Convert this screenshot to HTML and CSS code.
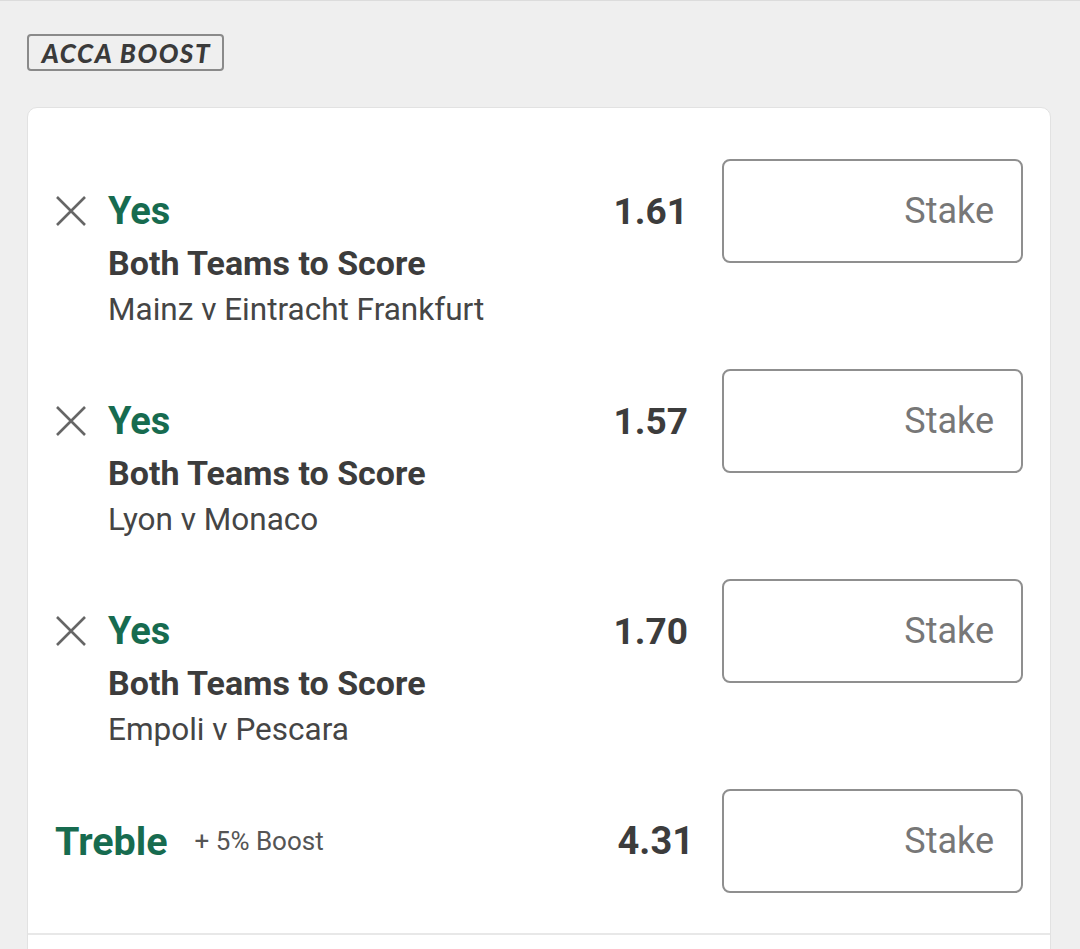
FILE: index.html
```html
<!DOCTYPE html>
<html lang="en">
<head>
<meta charset="utf-8">
<title>Acca Boost</title>
<link rel="stylesheet" href="styles.css">
</head>
<body>
<div class="page">
  <div class="badge-wrap"><span class="badge">ACCA BOOST</span></div>
  <section class="card">
    <div class="bet">
      <div class="bet-head">
        <svg class="remove" viewBox="0 0 30 30" width="30" height="30"><path d="M1 1 L29 29 M29 1 L1 29"/></svg>
        <span class="selection">Yes</span>
        <span class="odds">1.61</span>
        <div class="stake">Stake</div>
      </div>
      <div class="bet-body">
        <div class="market">Both Teams to Score</div>
        <div class="event">Mainz v Eintracht Frankfurt</div>
      </div>
    </div>
    <div class="bet">
      <div class="bet-head">
        <svg class="remove" viewBox="0 0 30 30" width="30" height="30"><path d="M1 1 L29 29 M29 1 L1 29"/></svg>
        <span class="selection">Yes</span>
        <span class="odds">1.57</span>
        <div class="stake">Stake</div>
      </div>
      <div class="bet-body">
        <div class="market">Both Teams to Score</div>
        <div class="event">Lyon v Monaco</div>
      </div>
    </div>
    <div class="bet">
      <div class="bet-head">
        <svg class="remove" viewBox="0 0 30 30" width="30" height="30"><path d="M1 1 L29 29 M29 1 L1 29"/></svg>
        <span class="selection">Yes</span>
        <span class="odds">1.70</span>
        <div class="stake">Stake</div>
      </div>
      <div class="bet-body">
        <div class="market">Both Teams to Score</div>
        <div class="event">Empoli v Pescara</div>
      </div>
    </div>
    <div class="multi">
      <span class="multi-name">Treble</span>
      <span class="boost">+ 5% Boost</span>
      <span class="multi-odds">4.31</span>
      <div class="stake">Stake</div>
    </div>
    <div class="card-foot"></div>
  </section>
</div>
</body>
</html>
```

FILE: styles.css
```css
* { box-sizing: border-box; }

html, body {
  margin: 0;
  padding: 0;
  background: #efefef;
}

body {
  font-family: Roboto, "Noto Sans", "Liberation Sans", sans-serif;
  color: #3c3c3c;
  border-top: 1px solid #dcdcdc;
}

.page {
  padding: 33px 29px 0 27px;
}

.badge-wrap {
  display: flex;
}

.badge {
  display: inline-flex;
  align-items: center;
  justify-content: center;
  width: 197px;
  height: 37px;
  padding-left: 2px;
  border: 2px solid #8a8a8a;
  border-radius: 4px;
  font-family: Lato, "DejaVu Sans", sans-serif;
  font-weight: 900;
  font-style: italic;
  font-size: 26px;
  letter-spacing: 1.6px;
  color: #3a3a3a;
}

.card {
  margin-top: 36px;
  background: #fff;
  border: 1px solid #e2e2e2;
  border-radius: 10px 10px 0 0;
  padding: 51px 27px 0 28px;
}

.bet {
  padding-bottom: 36px;
}

.bet-head {
  display: flex;
  align-items: center;
  height: 104px;
}

.remove {
  flex: none;
  width: 30px;
  height: 30px;
  margin: 0 22px 0 0;
  fill: none;
  stroke: #666;
  stroke-width: 2.6;
}

.selection {
  flex: 1;
  font-size: 38px;
  font-weight: 700;
  color: #176b4f;
  line-height: 1;
}

.odds {
  font-size: 37px;
  font-weight: 700;
  color: #3c3c3c;
  margin-right: 34px;
  line-height: 1;
}

.stake {
  flex: none;
  width: 301px;
  height: 104px;
  border: 2px solid #8f8f8f;
  border-radius: 8px;
  display: flex;
  align-items: center;
  justify-content: flex-end;
  padding-right: 27px;
  font-size: 36px;
  color: #777;
}

.bet-body {
  margin-top: -23px;
  padding-left: 52px;
}

.market {
  font-size: 34px;
  font-weight: 700;
  line-height: 46px;
  color: #3c3c3c;
}

.event {
  font-size: 31.5px;
  line-height: 46px;
  margin-top: 1px;
  color: #454545;
}

.multi {
  display: flex;
  align-items: center;
  height: 104px;
}

.multi-name {
  font-size: 39.5px;
  font-weight: 700;
  color: #176b4f;
  margin-left: -1px;
}

.boost {
  flex: 1;
  margin-left: 27px;
  font-size: 26px;
  color: #555;
}

.multi-odds {
  font-size: 38px;
  font-weight: 700;
  color: #3c3c3c;
  margin-right: 28px;
}

.card-foot {
  margin: 40px -27px 0 -28px;
  border-top: 2px solid #e8e8e8;
  height: 40px;
}
```
